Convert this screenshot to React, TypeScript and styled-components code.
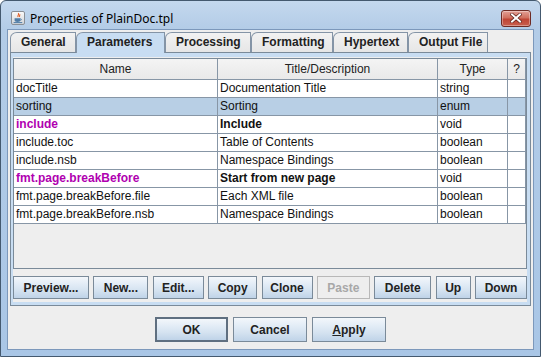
import React from 'react'
import styled, { createGlobalStyle, css } from 'styled-components'

const GlobalStyle = createGlobalStyle`
  html, body { margin: 0; padding: 0; background: #ffffff; }
  body { font-family: 'Liberation Sans', Arial, sans-serif; font-size: 12px; color: #000; }
  * { box-sizing: border-box; }
`

const Frame = styled.div`
  width: 541px;
  height: 357px;
  border: 1px solid #44596f;
  border-radius: 6px 6px 0 0;
  background: linear-gradient(180deg, #c4d8ee 0px, #b3cce7 28px, #a9c6e6 100%);
  padding: 0 6px 6px;
  display: flex;
  flex-direction: column;
`

const TitleBar = styled.div`
  height: 28px;
  padding: 6px 3px 0 4px;
  display: flex;
  align-items: center;
`

const Caption = styled.span`
  margin-left: 5px;
  flex: 1;
  font-family: 'Noto Sans', 'Liberation Sans', sans-serif;
  font-size: 12px;
  color: #000;
`

const CloseButton = styled.div`
  width: 30px;
  height: 17px;
  border: 1px solid #6e2b24;
  border-radius: 3px;
  background: linear-gradient(180deg, #e3a096 0%, #d0705f 45%, #bf4535 55%, #c85f4e 100%);
  box-shadow: inset 0 0 0 1px rgba(255, 255, 255, 0.35);
  display: flex;
  align-items: center;
  justify-content: center;
`

const Client = styled.div`
  flex: 1;
  border: 1px solid #7c98bb;
  background: #eeeeee;
  padding: 2px 2px 0;
  display: flex;
  flex-direction: column;
`

const TabRow = styled.div`
  display: flex;
  height: 20px;
`

const Tab = styled.div<{ $w: number; $active?: boolean }>`
  width: ${(p) => p.$w}px;
  height: 20px;
  border: 1px solid #8494a6;
  border-bottom: none;
  border-top-left-radius: 7px 6px;
  padding-left: 10px;
  font-weight: bold;
  font-size: 12px;
  line-height: 19px;
  color: #222;
  background: ${(p) => (p.$active ? '#c8ddf2' : 'linear-gradient(180deg, #f2f2f2, #e6e6e6)')};
  ${(p) =>
    p.$active &&
    css`
      position: relative;
      z-index: 1;
      height: 21px;
      margin-bottom: -1px;
    `}
`

const TabPanel = styled.div`
  height: 254px;
  border: 1px solid #7a8a99;
  background: #c8ddf2;
  padding: 4px 3px 3px 2px;
`

const PanelBody = styled.div`
  height: 100%;
  background: #eeeeee;
  padding-top: 1px;
  display: flex;
  flex-direction: column;
  gap: 7px;
`

const TableBox = styled.div`
  height: 211px;
  border: 1px solid #7a8a99;
  background: #eeeeee;
`

const Grid = styled.div`
  display: grid;
  grid-template-columns: 204px 220px 70px 18px;
  grid-template-rows: 21px;
  grid-auto-rows: 18px;
`

const HeadCell = styled.div`
  border-right: 1px solid #8796a6;
  border-bottom: 1px solid #8796a6;
  background: linear-gradient(180deg, #f4f4f4, #e9e9e9);
  text-align: center;
  line-height: 20px;
  color: #222;
  white-space: nowrap;
  overflow: hidden;
`

const Cell = styled.div<{ $sel?: boolean; $bold?: boolean; $magenta?: boolean }>`
  border-right: 1px solid #8796a6;
  border-bottom: 1px solid #8796a6;
  background: ${(p) => (p.$sel ? '#b8cfe5' : '#ffffff')};
  padding: 0 2px;
  line-height: 17px;
  white-space: nowrap;
  overflow: hidden;
  color: ${(p) => (p.$magenta ? '#b000b0' : '#111')};
  font-weight: ${(p) => (p.$bold ? 'bold' : 'normal')};
`

const ButtonRow = styled.div`
  display: flex;
  justify-content: space-between;
`

const Button = styled.div<{ $w: number; $h?: number; $default?: boolean; $disabled?: boolean }>`
  width: ${(p) => p.$w}px;
  height: ${(p) => p.$h ?? 23}px;
  border: ${(p) => (p.$default ? '2px solid #5f6f80' : p.$disabled ? '1px solid #b8b8b8' : '1px solid #7a8a99')};
  background: ${(p) =>
    p.$disabled ? '#eeeeee' : 'linear-gradient(180deg, #f3f7fb 0%, #e2ecf6 35%, #d4e2f0 65%, #bfd3e8 100%)'};
  color: ${(p) => (p.$disabled ? '#a8a8a8' : '#222')};
  font-weight: bold;
  font-size: 12px;
  display: flex;
  align-items: center;
  justify-content: center;
`

const DialogButtons = styled.div`
  display: flex;
  justify-content: center;
  gap: 5px;
  margin-top: 11px;
`

const Mnemonic = styled.span`
  text-decoration: underline;
`

const JavaIcon = () => (
  <svg width="14" height="14" viewBox="0 0 14 14">
    <defs>
      <linearGradient id="jbg" x1="0" y1="0" x2="0" y2="1">
        <stop offset="0" stopColor="#fbfbfb" />
        <stop offset="1" stopColor="#cfd3d8" />
      </linearGradient>
    </defs>
    <rect x="0.5" y="0.5" width="13" height="13" rx="1.5" fill="url(#jbg)" stroke="#8a8f96" />
    <path d="M7.2 2.2c1.6 1.3-1.4 2.2 0 3.6M8.6 3.4c0.9 0.9-0.8 1.4 0.1 2.4" stroke="#e2561b" strokeWidth="1.1" fill="none" />
    <path d="M3.6 7.2h5.8v2.1c0 1-1 1.6-2.9 1.6s-2.9-0.6-2.9-1.6z" fill="#4f7ca6" />
    <path d="M9.4 7.8c1.3 0 1.3 1.6 0 1.6" stroke="#4f7ca6" strokeWidth="0.9" fill="none" />
    <path d="M2.6 11.6h8.6" stroke="#4f7ca6" strokeWidth="1" />
  </svg>
)

const CloseGlyph = () => (
  <svg width="12" height="10" viewBox="0 0 12 10">
    <path d="M2 1.5l8 7M10 1.5l-8 7" stroke="#5a1e18" strokeWidth="3.4" strokeLinecap="square" />
    <path d="M2 1.5l8 7M10 1.5l-8 7" stroke="#ffffff" strokeWidth="2" strokeLinecap="square" />
  </svg>
)

type Row = { name: string; title: string; type: string; sel?: boolean; group?: boolean }

const rows: Row[] = [
  { name: 'docTitle', title: 'Documentation Title', type: 'string' },
  { name: 'sorting', title: 'Sorting', type: 'enum', sel: true },
  { name: 'include', title: 'Include', type: 'void', group: true },
  { name: 'include.toc', title: 'Table of Contents', type: 'boolean' },
  { name: 'include.nsb', title: 'Namespace Bindings', type: 'boolean' },
  { name: 'fmt.page.breakBefore', title: 'Start from new page', type: 'void', group: true },
  { name: 'fmt.page.breakBefore.file', title: 'Each XML file', type: 'boolean' },
  { name: 'fmt.page.breakBefore.nsb', title: 'Namespace Bindings', type: 'boolean' },
]

const tabs = [
  { label: 'General', w: 66 },
  { label: 'Parameters', w: 89, active: true },
  { label: 'Processing', w: 86 },
  { label: 'Formatting', w: 82 },
  { label: 'Hypertext', w: 75 },
  { label: 'Output File', w: 80 },
]

const tools = [
  { label: 'Preview...', w: 76 },
  { label: 'New...', w: 55 },
  { label: 'Edit...', w: 51 },
  { label: 'Copy', w: 49 },
  { label: 'Clone', w: 51 },
  { label: 'Paste', w: 53, disabled: true },
  { label: 'Delete', w: 57 },
  { label: 'Up', w: 35 },
  { label: 'Down', w: 52 },
]

export default function App() {
  return (
    <>
      <GlobalStyle />
      <Frame>
        <TitleBar>
          <JavaIcon />
          <Caption>Properties of PlainDoc.tpl</Caption>
          <CloseButton>
            <CloseGlyph />
          </CloseButton>
        </TitleBar>
        <Client>
          <TabRow>
            {tabs.map((t) => (
              <Tab key={t.label} $w={t.w} $active={t.active}>
                {t.label}
              </Tab>
            ))}
          </TabRow>
          <TabPanel>
            <PanelBody>
              <TableBox>
                <Grid>
                  <HeadCell>Name</HeadCell>
                  <HeadCell>Title/Description</HeadCell>
                  <HeadCell>Type</HeadCell>
                  <HeadCell>?</HeadCell>
                  {rows.map((r) => (
                    <React.Fragment key={r.name}>
                      <Cell $sel={r.sel} $bold={r.group} $magenta={r.group}>
                        {r.name}
                      </Cell>
                      <Cell $sel={r.sel} $bold={r.group}>
                        {r.title}
                      </Cell>
                      <Cell $sel={r.sel}>{r.type}</Cell>
                      <Cell $sel={r.sel} />
                    </React.Fragment>
                  ))}
                </Grid>
              </TableBox>
              <ButtonRow>
                {tools.map((b) => (
                  <Button key={b.label} $w={b.w} $disabled={b.disabled}>
                    {b.label}
                  </Button>
                ))}
              </ButtonRow>
            </PanelBody>
          </TabPanel>
          <DialogButtons>
            <Button $w={73} $h={25} $default>
              OK
            </Button>
            <Button $w={74} $h={25}>
              Cancel
            </Button>
            <Button $w={74} $h={25}>
              <Mnemonic>A</Mnemonic>pply
            </Button>
          </DialogButtons>
        </Client>
      </Frame>
    </>
  )
}
